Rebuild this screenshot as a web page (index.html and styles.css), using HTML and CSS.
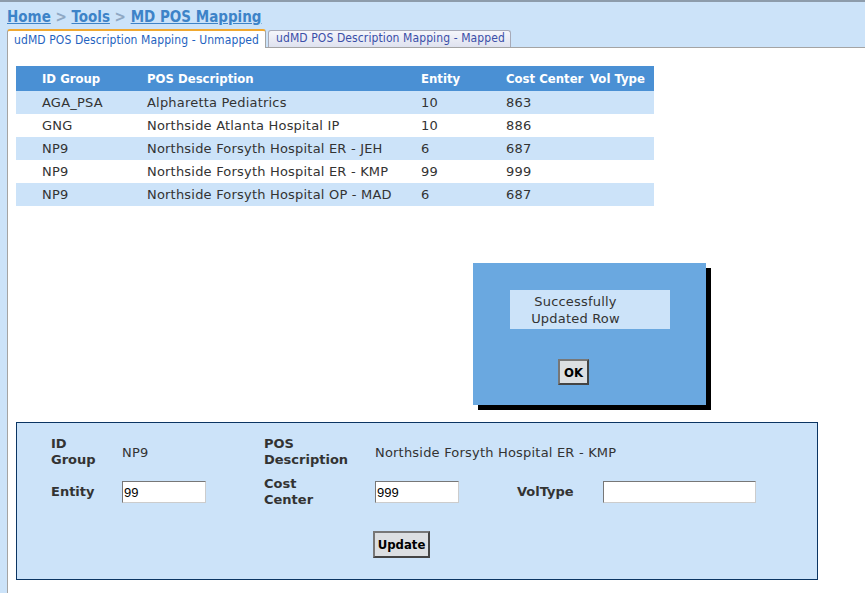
FILE: index.html
```html
<!DOCTYPE html>
<html>
<head>
<meta charset="utf-8">
<link rel="stylesheet" href="styles.css">
</head>
<body>
<div class="crumbs"><a href="#">Home</a> &gt; <a href="#">Tools</a> &gt; <a href="#">MD POS Mapping</a></div>
<div class="tabs">
  <div class="tab-strip">
    <div class="tab active">udMD POS Description Mapping - Unmapped</div>
    <div class="tab">udMD POS Description Mapping - Mapped</div>
  </div>
  <div class="panel">
    <table class="grid">
      <thead>
        <tr><th class="c1">ID Group</th><th class="c2">POS Description</th><th class="c3">Entity</th><th class="c4">Cost Center</th><th class="c5">Vol Type</th></tr>
      </thead>
      <tbody>
        <tr class="alt"><td>AGA_PSA</td><td>Alpharetta Pediatrics</td><td>10</td><td>863</td><td></td></tr>
        <tr><td>GNG</td><td>Northside Atlanta Hospital IP</td><td>10</td><td>886</td><td></td></tr>
        <tr class="alt"><td>NP9</td><td>Northside Forsyth Hospital ER - JEH</td><td>6</td><td>687</td><td></td></tr>
        <tr><td>NP9</td><td>Northside Forsyth Hospital ER - KMP</td><td>99</td><td>999</td><td></td></tr>
        <tr class="alt"><td>NP9</td><td>Northside Forsyth Hospital OP - MAD</td><td>6</td><td>687</td><td></td></tr>
      </tbody>
    </table>

    <div class="dialog">
      <div class="msg">Successfully<br>Updated Row</div>
      <button class="btn ok">OK</button>
    </div>

    <div class="form">
      <div class="frow">
        <div class="lbl l1">ID<br>Group</div>
        <div class="val v1">NP9</div>
        <div class="lbl l2">POS<br>Description</div>
        <div class="val">Northside Forsyth Hospital ER - KMP</div>
      </div>
      <div class="frow r2">
        <div class="lbl l1">Entity</div>
        <input class="inp i1" type="text" value="99">
        <div class="lbl l2">Cost<br>Center</div>
        <input class="inp i2" type="text" value="999">
        <div class="lbl l3">VolType</div>
        <input class="inp i3" type="text" value="">
      </div>
      <div class="actions"><button class="btn upd">Update</button></div>
    </div>
  </div>
</div>
</body>
</html>
```

FILE: styles.css
```css
* { box-sizing: border-box; }
html, body { height: 100%; }
body {
  margin: 0;
  background: #cce3f9;
  border-top: 2px solid #8d9cab;
  font-family: "DejaVu Sans", sans-serif;
  font-size: 13px;
  letter-spacing: 0.2px;
  color: #333;
  display: flex;
  flex-direction: column;
  overflow: hidden;
}
.crumbs {
  padding: 6px 0 0 7px;
  height: 26px;
  font-family: "DejaVu Sans Condensed", "DejaVu Sans", sans-serif;
  letter-spacing: 0;
  font-weight: bold;
  font-size: 15px;
  color: #8fa8c4;
}
.crumbs a { color: #3d83c8; text-decoration: underline; }
.tabs { margin-left: 7px; flex: 1; display: flex; flex-direction: column; }
.tab-strip { display: flex; align-items: flex-end; height: 19px; gap: 2px; }
.tab {
  font-family: "DejaVu Sans Condensed", "DejaVu Sans", sans-serif;
  letter-spacing: 0.1px;
  font-size: 12px;
  white-space: nowrap;
  color: #3a4fa8;
  padding: 0 5px 0 7px;
  height: 17px;
  line-height: 15px;
  border: 1px solid #a7aab8;
  border-bottom: none;
  border-radius: 3px 3px 0 0;
  background: linear-gradient(#f5f6fb, #dfe2ef);
}
.tab.active {
  height: 19px;
  line-height: 18px;
  background: #fff;
  color: #1f63c0;
  border-color: #a4a4a4;
  border-top: 2px solid #f0a830;
  padding: 0 0 0 6px;
  width: 259px;
  position: relative;
  z-index: 1;
  margin-bottom: -1px;
}
.panel {
  flex: 1;
  background: #fff;
  border-left: 1px solid #a4a4a4;
  border-top: 1px solid #a4a4a4;
  padding: 18px 0 0 8px;
  position: relative;
}
.grid { border-collapse: collapse; width: 638px; }
.grid th {
  font-family: "DejaVu Sans Condensed", "DejaVu Sans", sans-serif;
  letter-spacing: 0;
  background: #4a90d4;
  color: #fff;
  font-weight: bold;
  text-align: left;
  height: 25px;
  padding: 0;
}
.grid td { height: 23px; padding: 0; color: #333; white-space: nowrap; }
.grid tr.alt td { background: #cce3f9; }
.grid th:first-child, .grid td:first-child { padding-left: 26px; width: 131px; }
.grid th.c2 { width: 274px; }
.grid th.c3 { width: 85px; }
.grid th.c4 { width: 84px; }

.dialog {
  position: absolute;
  left: 465px;
  top: 215px;
  width: 233px;
  height: 142px;
  background: #6aa8e0;
  box-shadow: 5px 5px 0 #000;
  display: flex;
  flex-direction: column;
  align-items: center;
  padding-top: 27px;
}
.msg {
  width: 160px;
  height: 39px;
  background: #cce3f9;
  text-align: center;
  line-height: 17px;
  padding: 3px 28px 0 0;
  color: #333;
}
.btn {
  font-family: "DejaVu Sans Condensed", "DejaVu Sans", sans-serif;
  letter-spacing: 0;
  font-weight: bold;
  background: #dcdfe2;
  border: 2px solid #555;
  border-color: #777 #444 #444 #777;
  color: #000;
  padding: 0;
}
.ok { margin-top: 30px; margin-right: 32px; width: 31px; height: 26px; font-size: 13px; }

.form {
  margin-top: 216px;
  width: 802px;
  height: 158px;
  background: #cce3f9;
  border: 1px solid #0b3563;
  padding: 13px 0 0 34px;
}
.frow { display: flex; align-items: center; }
.r2 { margin-top: 8px; }
.lbl { font-weight: bold; color: #333; line-height: 16px; letter-spacing: 0; }
.l1 { width: 71px; }
.v1 { width: 142px; }
.l2 { width: 111px; }
.val { color: #333; }
.inp {
  height: 22px;
  border: 1px solid #888;
  border-color: #777 #ccc #ccc #777;
  background: #fff;
  font-family: "Liberation Sans Narrow", "Liberation Sans", sans-serif;
  font-size: 13px;
  padding: 0 1px;
  color: #000;
}
.i1 { width: 84px; margin-right: 58px; }
.i2 { width: 84px; margin-right: 58px; }
.l3 { width: 86px; }
.i3 { width: 153px; }
.actions { padding-left: 322px; margin-top: 23px; }
.upd { width: 57px; height: 27px; font-size: 13px; }
```
